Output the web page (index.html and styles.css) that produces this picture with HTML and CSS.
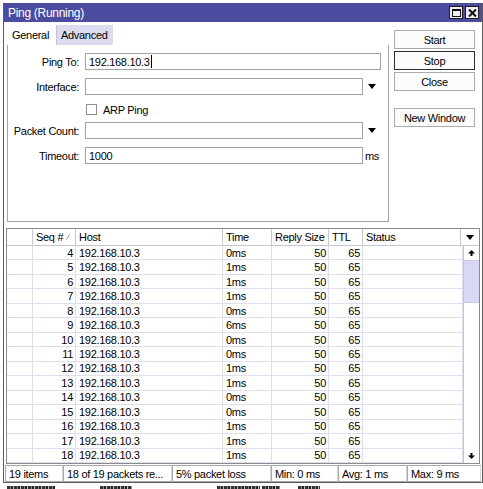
FILE: index.html
```html
<!DOCTYPE html>
<html lang="en">
<head>
    <title>Ping (Running)</title>
    <meta name="viewport" content="width=device-width, initial-scale=1.0">
    <link rel="stylesheet" href="styles.css">
</head>
<body>
    <div class="window">
        <div class="titlebar">
            <span class="title">Ping (Running)</span>
            <span class="tb-btn">
                <svg width="9" height="8" viewBox="0 0 9 8"><rect x="0.5" y="0.5" width="8" height="7" fill="none" stroke="#111"/><rect x="0" y="0" width="9" height="2" fill="#111"/></svg>
            </span>
            <span class="tb-btn">
                <svg width="9" height="8" viewBox="0 0 9 8"><path d="M1 0.5 L8 7.5 M8 0.5 L1 7.5" stroke="#111" stroke-width="2"/></svg>
            </span>
        </div>

        <div class="top">
            <div class="tabs-area">
                <div class="tabs">
                    <div class="tab active">General</div>
                    <div class="tab other">Advanced</div>
                </div>
                <div class="panel">
                    <div class="row">
                        <span class="label">Ping To:</span>
                        <span class="input wide">192.168.10.3<i class="caret"></i></span>
                    </div>
                    <div class="row">
                        <span class="label">Interface:</span>
                        <span class="input short"></span>
                        <span class="drop"></span>
                    </div>
                    <div class="row check-row">
                        <span class="box"></span>
                        <span>ARP Ping</span>
                    </div>
                    <div class="row">
                        <span class="label">Packet Count:</span>
                        <span class="input short"></span>
                        <span class="drop"></span>
                    </div>
                    <div class="row">
                        <span class="label">Timeout:</span>
                        <span class="input short">1000</span>
                        <span class="unit">ms</span>
                    </div>
                </div>
            </div>
            <div class="buttons">
                <div class="btn">Start</div>
                <div class="btn stop">Stop</div>
                <div class="btn">Close</div>
                <div class="btn new">New Window</div>
            </div>
        </div>

        <div class="grid">
            <div class="thead">
                <div class="th"></div>
                <div class="th">Seq # <svg class="sort" width="4" height="6" viewBox="0 0 4 6"><path d="M0.5 5.5 L3.5 0.5" stroke="#999" stroke-width="1"/></svg></div>
                <div class="th">Host</div>
                <div class="th">Time</div>
                <div class="th">Reply Size</div>
                <div class="th">TTL</div>
                <div class="th">Status</div>
                <div class="th menu"><span class="drop"></span></div>
            </div>
            <div class="tbody">
                <div class="rows">
                    <div class="tr"><span></span><span class="num">4</span><span>192.168.10.3</span><span>0ms</span><span class="num">50</span><span class="num">65</span><span></span></div>
                    <div class="tr"><span></span><span class="num">5</span><span>192.168.10.3</span><span>1ms</span><span class="num">50</span><span class="num">65</span><span></span></div>
                    <div class="tr"><span></span><span class="num">6</span><span>192.168.10.3</span><span>1ms</span><span class="num">50</span><span class="num">65</span><span></span></div>
                    <div class="tr"><span></span><span class="num">7</span><span>192.168.10.3</span><span>1ms</span><span class="num">50</span><span class="num">65</span><span></span></div>
                    <div class="tr"><span></span><span class="num">8</span><span>192.168.10.3</span><span>0ms</span><span class="num">50</span><span class="num">65</span><span></span></div>
                    <div class="tr"><span></span><span class="num">9</span><span>192.168.10.3</span><span>6ms</span><span class="num">50</span><span class="num">65</span><span></span></div>
                    <div class="tr"><span></span><span class="num">10</span><span>192.168.10.3</span><span>0ms</span><span class="num">50</span><span class="num">65</span><span></span></div>
                    <div class="tr"><span></span><span class="num">11</span><span>192.168.10.3</span><span>0ms</span><span class="num">50</span><span class="num">65</span><span></span></div>
                    <div class="tr"><span></span><span class="num">12</span><span>192.168.10.3</span><span>1ms</span><span class="num">50</span><span class="num">65</span><span></span></div>
                    <div class="tr"><span></span><span class="num">13</span><span>192.168.10.3</span><span>1ms</span><span class="num">50</span><span class="num">65</span><span></span></div>
                    <div class="tr"><span></span><span class="num">14</span><span>192.168.10.3</span><span>0ms</span><span class="num">50</span><span class="num">65</span><span></span></div>
                    <div class="tr"><span></span><span class="num">15</span><span>192.168.10.3</span><span>0ms</span><span class="num">50</span><span class="num">65</span><span></span></div>
                    <div class="tr"><span></span><span class="num">16</span><span>192.168.10.3</span><span>1ms</span><span class="num">50</span><span class="num">65</span><span></span></div>
                    <div class="tr"><span></span><span class="num">17</span><span>192.168.10.3</span><span>1ms</span><span class="num">50</span><span class="num">65</span><span></span></div>
                    <div class="tr"><span></span><span class="num">18</span><span>192.168.10.3</span><span>1ms</span><span class="num">50</span><span class="num">65</span><span></span></div>
                </div>
                <div class="scrollbar">
                    <div class="sb-btn">
                        <svg width="7" height="6" viewBox="0 0 7 6"><path d="M3.5 0 L7 3.5 L0 3.5 Z" fill="#000"/><rect x="2.5" y="3" width="2" height="3" fill="#000"/></svg>
                    </div>
                    <div class="thumb"></div>
                    <div class="track"></div>
                    <div class="sb-btn">
                        <svg width="7" height="6" viewBox="0 0 7 6"><path d="M3.5 6 L7 2.5 L0 2.5 Z" fill="#000"/><rect x="2.5" y="0" width="2" height="3" fill="#000"/></svg>
                    </div>
                </div>
            </div>
        </div>

        <div class="status">
            <div class="seg s1">19 items</div>
            <div class="seg s2">18 of 19 packets re...</div>
            <div class="seg s3">5% packet loss</div>
            <div class="seg s4">Min: 0 ms</div>
            <div class="seg s5">Avg: 1 ms</div>
            <div class="seg s6">Max: 9 ms</div>
        </div>
    </div>

    <!-- the edge of the window underneath -->
    <div class="below">
        <span class="frag f1"></span>
        <span class="frag f2"></span>
        <span class="frag f3"></span>
        <span class="frag f4"></span>
        <span class="frag f5"></span>
    </div>
</body>
</html>
```

FILE: styles.css
```css
body {
    margin: 0;
    width: 483px;
    height: 489px;
    overflow: hidden;
    background-color: #fff;
    font-family: "Liberation Sans", Arial, sans-serif;
    font-size: 11px;
    letter-spacing: -0.3px;
    color: #000;
}
.window {
    margin: 3px 0 0 3px;
    width: 480px;
    height: 480px;
    box-sizing: border-box;
    border: 1px solid #5c5c5c;
    border-top: none;
    background-color: #fff;
    display: flex;
    flex-direction: column;
}
.titlebar {
    height: 19px;
    flex: none;
    background-color: #4b4ba0;
    color: #fff;
    font-size: 12px;
    display: flex;
    align-items: center;
    padding: 0 3px 0 4px;
}
.title {
    flex: 1;
}
.tb-btn {
    width: 14px;
    height: 13px;
    box-sizing: border-box;
    margin-left: 2px;
    background-color: #ededf2;
    border: 1px solid #1e1e1e;
    display: flex;
    align-items: center;
    justify-content: center;
}

/* general tab + buttons */
.top {
    display: flex;
    height: 206px;
    flex: none;
}
.tabs-area {
    width: 382px;
    height: 200px;
    margin-left: 3px;
    display: flex;
    flex-direction: column;
}
.tabs {
    display: flex;
    height: 20px;
    margin-top: 3px;
}
.tab {
    display: flex;
    align-items: center;
    padding: 0 5px;
}
.tab.active {
    width: 49px;
    box-sizing: border-box;
}
.tab.other {
    background-color: #dcdcf0;
    border-left: 1px solid #c4c4dc;
    padding: 0 4px 0 4px;
    width: 57px;
    box-sizing: border-box;
}
.panel {
    flex: 1;
    border: 1px solid #a3a3a3;
    border-top: none;
    padding-top: 8px;
}
.row {
    display: flex;
    align-items: center;
    height: 17px;
    margin-bottom: 8px;
}
.label {
    width: 71px;
    margin-right: 6px;
    text-align: right;
    flex: none;
}
.input {
    height: 17px;
    box-sizing: border-box;
    border: 1px solid #a3a3a3;
    background-color: #fff;
    padding-left: 3px;
    display: flex;
    align-items: center;
    flex: none;
}
.input.wide {
    width: 296px;
}
.input.short {
    width: 278px;
}
.caret {
    display: inline-block;
    width: 1px;
    height: 13px;
    background-color: #000;
    margin-left: 1px;
}
.drop {
    width: 0;
    height: 0;
    margin-left: 5px;
    border-left: 4.5px solid transparent;
    border-right: 4.5px solid transparent;
    border-top: 5px solid #000;
}
.check-row {
    height: 13px;
    margin-bottom: 6px;
    padding-left: 78px;
}
.box {
    width: 11px;
    height: 11px;
    box-sizing: border-box;
    border: 1px solid #8e8e8e;
    background-color: #fff;
    margin-right: 6px;
}
.unit {
    margin-left: 2px;
}
.buttons {
    width: 81px;
    margin-left: 5px;
    padding-top: 8px;
    display: flex;
    flex-direction: column;
    gap: 2px;
}
.btn {
    height: 19px;
    box-sizing: border-box;
    border: 1px solid #ababab;
    background-color: #fcfcfc;
    display: flex;
    align-items: center;
    justify-content: center;
}
.btn.stop {
    border-color: #2c2c2c;
}
.btn.new {
    margin-top: 15px;
}

/* ping table */
.grid {
    margin-left: 2px;
    width: 474px;
    height: 236px;
    flex: none;
    box-sizing: border-box;
    border: 1px solid #8a8a8a;
    display: flex;
    flex-direction: column;
}
.thead {
    display: grid;
    grid-template-columns: 26px 43px 147px 49px 57px 34px 98px 18px;
    height: 17px;
    flex: none;
    box-sizing: border-box;
    border-bottom: 1px solid #c6c6d4;
}
.th {
    border-right: 1px solid #c6c6d4;
    padding-left: 3px;
    display: flex;
    align-items: center;
    white-space: nowrap;
}
.th:last-child {
    border-right: none;
}
.sort {
    margin-left: 3px;
}
.th.menu {
    padding-left: 0;
    justify-content: center;
}
.th.menu .drop {
    margin-left: 0;
}
.tbody {
    flex: 1;
    display: flex;
    min-height: 0;
}
.rows {
    flex: 1;
}
.tr {
    display: grid;
    grid-template-columns: 26px 43px 147px 49px 57px 34px 1fr;
    height: 14.47px;
    box-sizing: border-box;
    border-bottom: 1px solid #dedeef;
}
.tr span {
    border-right: 1px solid #dedeef;
    padding-left: 3px;
    display: flex;
    align-items: center;
    white-space: nowrap;
}
.tr span.num {
    justify-content: flex-end;
    padding-left: 0;
    padding-right: 2px;
}
.scrollbar {
    width: 16px;
    box-sizing: border-box;
    border-left: 1px solid #c6c6d4;
    display: flex;
    flex-direction: column;
}
.sb-btn {
    height: 14px;
    display: flex;
    align-items: center;
    justify-content: center;
    flex: none;
}
.thumb {
    height: 41px;
    background-color: #d8d8f6;
    border-top: 1px solid #c8c8e8;
    border-bottom: 1px solid #c8c8e8;
    flex: none;
}
.track {
    flex: 1;
}

/* status bar */
.status {
    display: flex;
    height: 17px;
    margin: 1px 0 0 1px;
}
.seg {
    box-sizing: border-box;
    border: 1px solid #a8a8a8;
    border-right-color: #d6d6d6;
    padding-left: 3px;
    display: flex;
    align-items: center;
    white-space: nowrap;
    overflow: hidden;
}
.s1 { width: 58px; }
.s2 { width: 109px; }
.s3 { width: 99px; }
.s4 { width: 67px; }
.s5 { width: 69px; }
.s6 { width: 74px; }

/* window underneath, cut off */
.below {
    height: 6px;
    display: flex;
    align-items: flex-end;
}
.frag {
    height: 3px;
    background: repeating-linear-gradient(90deg, #333 0 3px, #888 3px 4px, #222 4px 6px, #bbb 6px 7px);
}
.f1 { width: 48px; margin-left: 7px; }
.f2 { width: 32px; margin-left: 45px; }
.f3 { width: 43px; margin-left: 85px; }
.f4 { width: 18px; margin-left: 2px; }
.f5 { width: 22px; margin-left: 18px; }
```
